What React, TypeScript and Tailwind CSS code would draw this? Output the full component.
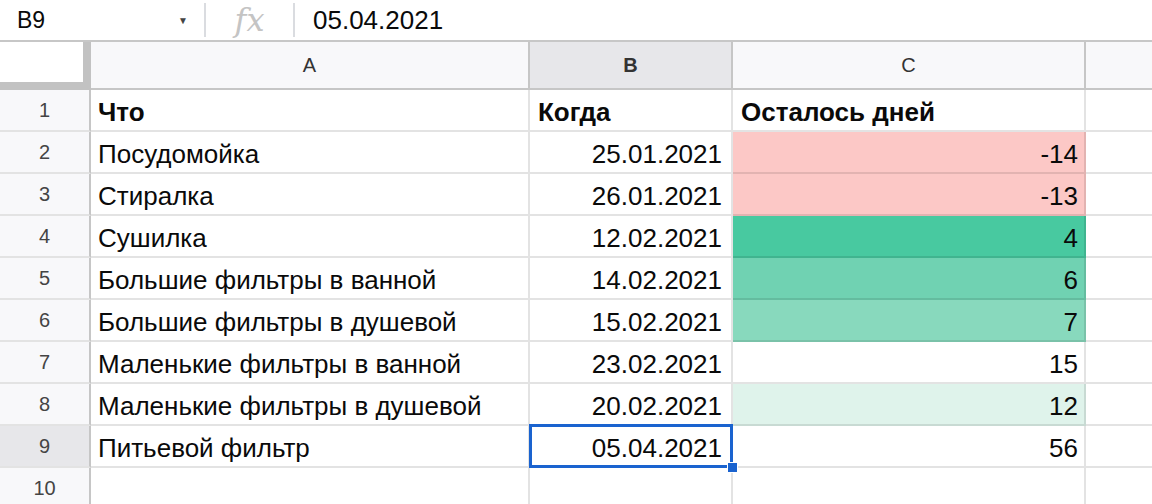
const rows = [
  { what: "Что", when: "Когда", left: "Осталось дней", head: true },
  { what: "Посудомойка", when: "25.01.2021", left: "-14", bg: "bg-[#fcc8c6]" },
  { what: "Стиралка", when: "26.01.2021", left: "-13", bg: "bg-[#fcc8c6]" },
  { what: "Сушилка", when: "12.02.2021", left: "4", bg: "bg-[#48c9a0]" },
  { what: "Большие фильтры в ванной", when: "14.02.2021", left: "6", bg: "bg-[#70d2b2]" },
  { what: "Большие фильтры в душевой", when: "15.02.2021", left: "7", bg: "bg-[#88d9bd]" },
  { what: "Маленькие фильтры в ванной", when: "23.02.2021", left: "15" },
  { what: "Маленькие фильтры в душевой", when: "20.02.2021", left: "12", bg: "bg-[#dff3eb]" },
  { what: "Питьевой фильтр", when: "05.04.2021", left: "56", selected: true },
  { what: "", when: "", left: "" },
];

const font = { fontFamily: '"Liberation Sans", Arial, sans-serif' };

export default function App() {
  return (
    <div className="w-[1152px] h-[504px] overflow-hidden bg-white text-[#0a0a0a]" style={font}>
      {/* formula bar */}
      <div className="flex items-center h-[42px] border-b-2 border-[#c7c7c7]">
        <div className="w-[204px] flex items-center pl-[17px] pr-[16px] text-[23px]">
          <span className="flex-1">B9</span>
          <span className="text-[10px] text-[#444]">▼</span>
        </div>
        <div className="w-[2px] h-[34px] bg-[#dadce0]" />
        <div className="w-[87px] flex justify-center">
          <span className="text-[32px] italic text-[#c4c4c4] leading-none" style={{ fontFamily: '"DejaVu Serif", serif' }}>
            fx
          </span>
        </div>
        <div className="w-[2px] h-[34px] bg-[#dadce0]" />
        <div className="pl-[18px] text-[26px]">05.04.2021</div>
      </div>

      {/* sheet */}
      <div className="grid grid-cols-[91px_439px_203px_353px_1fr] grid-rows-[48px_repeat(10,42px)]">
        {/* column headers */}
        <div className="bg-white border-r-[8px] border-b-[8px] border-[#c2c2c2]" />
        <div className="flex items-center justify-center bg-[#f8f8fa] border-r-2 border-b-2 border-[#c6c6c6] text-[20px] text-[#333]">A</div>
        <div className="flex items-center justify-center bg-[#e7e7ea] border-r-2 border-b-2 border-[#c6c6c6] text-[20px] text-[#333] font-bold">B</div>
        <div className="flex items-center justify-center bg-[#f8f8fa] border-r-2 border-b-2 border-[#c6c6c6] text-[20px] text-[#333]">C</div>
        <div className="bg-[#f8f8fa] border-b-2 border-[#c6c6c6]" />

        {rows.map((r, i) => (
          <Row key={i} n={i + 1} {...r} />
        ))}
      </div>
    </div>
  );
}

function Row({
  n,
  what,
  when,
  left,
  bg,
  head,
  selected,
}: {
  n: number;
  what: string;
  when: string;
  left: string;
  bg?: string;
  head?: boolean;
  selected?: boolean;
}) {
  const weight = head ? "font-bold" : "";
  return (
    <>
      <div
        className={`flex items-center justify-center border-r-2 border-r-[#c6c6c6] border-b-2 border-b-[#e3e3e3] text-[20px] text-[#444] ${
          selected ? "bg-[#e7e7ea]" : "bg-[#f8f8fa]"
        }`}
      >
        {n}
      </div>
      <div className={`flex items-center pt-[4px] pl-[7px] border-r-2 border-b-2 border-[#e3e3e3] text-[26px] leading-[30px] whitespace-nowrap ${weight}`}>
        {what}
      </div>
      <div
        className={`relative flex items-center pt-[4px] border-r-2 border-b-2 border-[#e3e3e3] text-[26px] leading-[30px] ${
          head ? "justify-start pl-[8px]" : "justify-end pr-[9px]"
        } ${weight}`}
      >
        {when}
        {selected && (
          <>
            <div className="absolute z-10 -left-[1px] -top-[2px] -right-[2px] -bottom-[2px] border-[3px] border-[#1a63cf]" />
            <div className="absolute z-20 -right-[7px] -bottom-[7px] w-[11px] h-[11px] bg-[#1a63cf] border border-white" />
          </>
        )}
      </div>
      <div
        className={`flex items-center pt-[4px] text-[26px] leading-[30px] border-b-2 border-r-2 ${
          bg ? `${bg} border-black/10` : "border-[#e3e3e3]"
        } ${head ? "justify-start pl-[8px]" : "justify-end pr-[6px]"} ${weight}`}
      >
        {left}
      </div>
      <div className="border-b-2 border-[#e3e3e3]" />
    </>
  );
}
